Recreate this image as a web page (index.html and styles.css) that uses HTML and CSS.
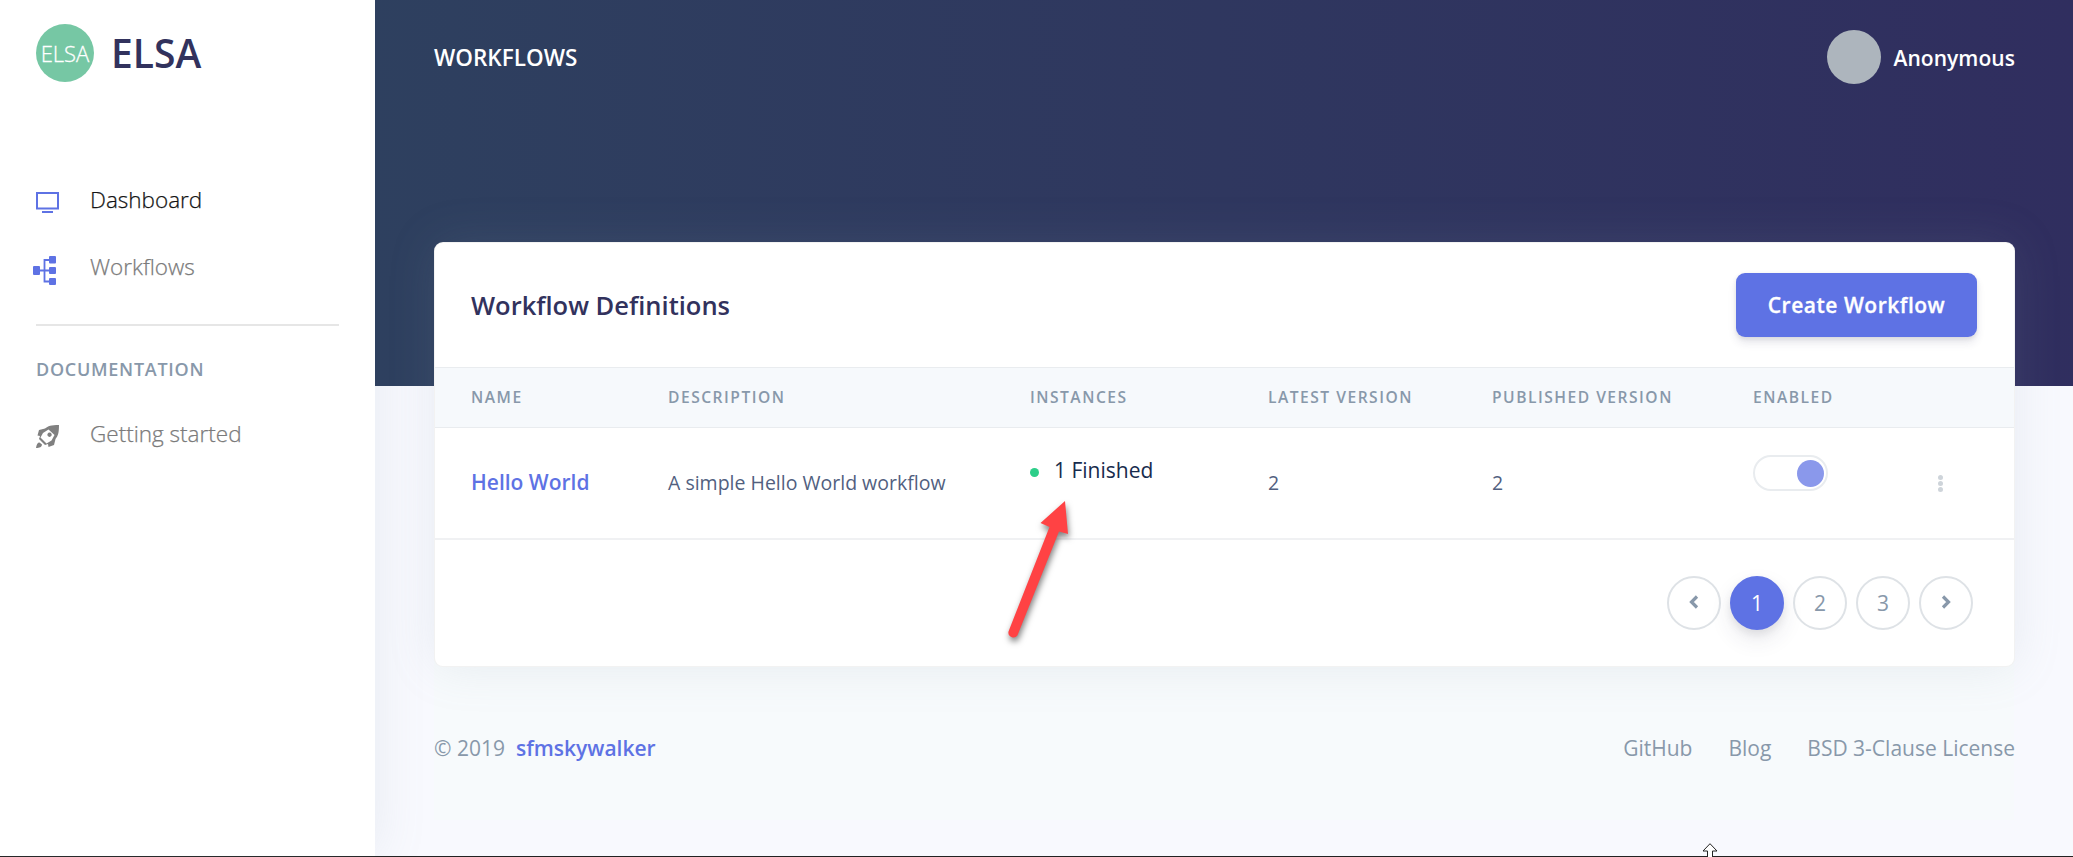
FILE: index.html
```html
<!DOCTYPE html>
<html lang="en">
<head>
<meta charset="utf-8">
<title>Elsa Workflows</title>
<link rel="stylesheet" href="styles.css">
</head>
<body>
<div class="app">
  <aside class="sidebar">
    <div class="brand">
      <span class="brand-logo"><span class="logo-text">ELSA</span></span>
      <span class="brand-name">ELSA</span>
    </div>
    <nav class="menu">
      <a class="menu-item active">
        <svg class="menu-icon" viewBox="0 0 28 28"><path fill="none" stroke="#5e72e4" stroke-width="2" d="M4 4h21v15.500H4zM9 23h11"/></svg>
        <span>Dashboard</span>
      </a>
      <a class="menu-item">
        <svg class="menu-icon tree" viewBox="0 0 28 32"><g fill="#5e72e4"><rect x="1" y="12" width="7" height="9" rx="1"/><rect x="17" y="2" width="7" height="7.500" rx="1"/><rect x="17" y="13" width="7" height="7" rx="1"/><rect x="17" y="24" width="7" height="7" rx="1"/></g><path fill="none" stroke="#5e72e4" stroke-width="1.800" d="M8 16.500h9M17 6h-4.500v21.500H17"/></svg>
        <span>Workflows</span>
      </a>
    </nav>
    <hr class="divider">
    <h6 class="menu-heading">Documentation</h6>
    <a class="menu-item">
      <svg class="menu-icon" viewBox="0 0 28 28"><path fill="#808080" fill-rule="evenodd" d="M26 2C18 2 15 3 12 5.500L6 7 4.500 12.500 7 13l-1 3 6 6 3-1 .5 3 5.500-2 1.500-6C25 13 26 10 26 2zM15.500 6.500l6 5.500-3 5.500-5 3-6-6 2.500-4.500zM16.500 9.500a2.200 2.200 0 1 0 .1 0zM6.500 19.500c-2 0-3 2-3.500 5.500 3.500 0 6-1 6-3.500z"/></svg>
      <span>Getting started</span>
    </a>
  </aside>
  <main class="main">
    <header class="hero">
      <h4 class="page-title">Workflows</h4>
      <div class="user"><span class="avatar"></span><span class="user-name">Anonymous</span></div>
    </header>
    <section class="card">
      <div class="card-head">
        <h3 class="card-title">Workflow Definitions</h3>
        <button class="create">Create Workflow</button>
      </div>
      <table class="grid">
        <colgroup><col class="c-name"><col class="c-desc"><col class="c-inst"><col class="c-latest"><col class="c-pub"><col class="c-enabled"><col></colgroup>
        <thead><tr><th>Name</th><th>Description</th><th>Instances</th><th>Latest Version</th><th>Published Version</th><th>Enabled</th><th></th></tr></thead>
        <tbody><tr>
          <td><a class="link">Hello World</a></td>
          <td>A simple Hello World workflow</td>
          <td><div class="status"><i class="dot"></i><span>1 Finished</span></div></td>
          <td>2</td>
          <td>2</td>
          <td><div class="toggle"><i class="knob"></i></div></td>
          <td><div class="kebab"><i></i><i></i><i></i></div></td>
        </tr></tbody>
      </table>
      <div class="pager">
        <a class="page"><svg viewBox="0 0 12 16" class="chev"><path d="M9 2.500 3.500 8 9 13.500"/></svg></a>
        <a class="page current">1</a>
        <a class="page">2</a>
        <a class="page">3</a>
        <a class="page"><svg viewBox="0 0 12 16" class="chev"><path d="M3 2.500 8.500 8 3 13.500"/></svg></a>
      </div>
    </section>
    <footer class="footer">
      <div class="copy"><span>© 2019</span><a class="link">sfmskywalker</a></div>
      <div class="foot-links"><a>GitHub</a><a>Blog</a><a>BSD 3-Clause License</a></div>
    </footer>
  </main>
</div>
<svg class="arrow" viewBox="0 0 90 160"><path fill="#ff4244" d="M75 11 50.500 33l9 4L18.500 141.500a5 5 0 0 0 9 3.800L69 41.500l9 2.500z"/></svg>
<svg class="cursor" viewBox="0 0 16 14"><path fill="#fff" stroke="#222" d="M8 .7 15 8H10.500v7H5.500V8H1z"/></svg>
</body>
</html>
```
FILE: styles.css
```css
* { box-sizing: border-box; }
body {
  margin: 0;
  font-family: "Open Sans", "Noto Sans", sans-serif;
  font-size: 21px;
  color: #525f7f;
  overflow: hidden;
}
h3, h4, h6 { margin: 0; }
.app { display: flex; height: 857px; border-bottom: 1px solid #222; }

.sidebar {
  position: relative;
  z-index: 1;
  width: 375px;
  padding: 24px 36px;
  background: #fff;
  box-shadow: 0 0 48px rgba(136, 152, 170, .15);
}
.brand { display: flex; align-items: center; gap: 17px; height: 58px; }
.brand-logo {
  display: flex;
  align-items: center;
  justify-content: center;
  width: 58px;
  height: 58px;
  border-radius: 50%;
  background: #76c7a4;
}
.logo-text { color: #fff; font-size: 22px; font-weight: 300; line-height: 28px; -webkit-text-stroke: .3px #fff; }
.brand-name { color: #32325d; font-size: 39px; font-weight: 600; line-height: 58px; }
.menu { margin-top: 84px; }
.menu-item { display: flex; align-items: center; height: 67px; color: #7b7b7b; font-size: 22.500px; font-weight: 300; -webkit-text-stroke: .25px currentColor; }
.menu-item.active { color: #141414; }
.menu-icon { width: 28px; height: 28px; margin: 7px 29px 0 -3px; }
.menu-icon.tree { height: 32px; margin: 6px 30px 0 -4px; }
.divider { margin: 24px 0 0; border: 0; border-top: 2px solid #e6e6e6; }
.menu-heading {
  margin: 30px 0 17px;
  color: #8898aa;
  font-size: 18px;
  font-weight: 600;
  line-height: 27px;
  letter-spacing: .72px;
  text-transform: uppercase;
}

.main {
  flex: 1;
  padding: 0 58px 0 59px;
  background: linear-gradient(#f7fafc, #f7fafc) 59px 0 / 1580px 820px no-repeat, #f8f9fe;
}
.hero {
  position: relative;
  z-index: 2;
  display: flex;
  justify-content: space-between;
  height: 386px;
  margin: 0 -58px -144px -59px;
  padding: 30px 58px 0 59px;
  color: #fff;
  background: linear-gradient(87deg, #2e405f, #302e5f);
}
.page-title { padding-top: 1px; font-size: 22.500px; font-weight: 600; line-height: 54px; text-transform: uppercase; }
.user { display: flex; align-items: center; gap: 13px; height: 54px; font-weight: 600; }
.user-name { padding-top: 2px; letter-spacing: .05px; }
.avatar { width: 54px; height: 54px; border-radius: 50%; background: #adb5bd; }

.card {
  position: relative;
  z-index: 3;
  height: 425px;
  background: #fff;
  border: 1px solid rgba(0, 0, 0, .05);
  border-radius: 9px;
  box-shadow: 0 0 48px rgba(136, 152, 170, .15);
}
.card-head { display: flex; justify-content: space-between; height: 124px; padding: 30px 37px 0 36px; }
.card-title { color: #32325d; font-size: 25.500px; font-weight: 600; line-height: 64px; }
.create {
  width: 241px;
  height: 64px;
  padding: 0;
  border: 0;
  border-radius: 9px;
  background: #5e72e4;
  color: #fff;
  font: 600 21px "Open Sans", sans-serif;
  letter-spacing: .525px;
  -webkit-text-stroke: .3px #fff;
  box-shadow: 0 6px 9px rgba(50, 50, 93, .11), 0 1.500px 4px rgba(0, 0, 0, .08);
}
.grid { width: 100%; table-layout: fixed; border-collapse: separate; border-spacing: 0; }
.c-name { width: 197px; }
.c-desc { width: 362px; }
.c-inst { width: 238px; }
.c-latest { width: 224px; }
.c-pub { width: 261px; }
.c-enabled { width: 175px; }
th {
  height: 61px;
  padding: 0 0 2px 36px;
  background: #f6f9fc;
  border: solid #e9ecef;
  border-width: 1px 0;
  color: #8898aa;
  font-size: 15.600px;
  font-weight: 600;
  letter-spacing: 1.500px;
  text-align: left;
  text-transform: uppercase;
  white-space: nowrap;
}
td { height: 112px; padding: 0 0 2px 36px; border-bottom: 2px solid #f0f1f3; font-size: 19.500px; white-space: nowrap; }
.link { color: #5e72e4; font-size: 21px; font-weight: 600; }
.status { display: flex; align-items: center; gap: 15px; padding-bottom: 25px; color: #172b4d; font-size: 21px; }
.dot { width: 9px; height: 9px; margin-top: 6px; border-radius: 50%; background: #2dce89; }
.toggle { display: flex; justify-content: flex-end; width: 75px; height: 36px; margin-bottom: 19px; padding: 3px 2px; border: 2px solid #e9ecef; border-radius: 18px; }
.knob { width: 27px; height: 27px; border-radius: 50%; background: #8a98eb; }
.kebab { display: flex; flex-direction: column; gap: 1px; padding: 3px 0 0 10px; }
.kebab i { width: 5px; height: 5px; border-radius: 50%; background: #ced4da; }
.pager { display: flex; justify-content: flex-end; gap: 9px; padding: 36px 41px 0 0; }
.page {
  display: flex;
  align-items: center;
  justify-content: center;
  width: 54px;
  height: 54px;
  border: 2px solid #dee2e6;
  border-radius: 50%;
  color: #8898aa;
}
.page.current {
  border-color: #5e72e4;
  background: #5e72e4;
  color: #fff;
  box-shadow: 0 10px 21px rgba(50, 50, 93, .1), 0 4px 9px rgba(0, 0, 0, .08);
}
.chev { width: 12px; height: 16px; margin-top: -2px; fill: none; stroke: #8898aa; stroke-width: 3.200; }

.footer { display: flex; justify-content: space-between; padding-top: 66px; line-height: 30px; color: #8898aa; }
.copy { display: flex; gap: 11px; }
.foot-links { display: flex; gap: 36px; }

.arrow { position: absolute; z-index: 4; left: 990px; top: 490px; width: 90px; height: 160px; filter: drop-shadow(1px 4px 3px rgba(0, 0, 0, .5)); }
.cursor { position: absolute; z-index: 4; left: 1702px; top: 843px; width: 16px; height: 14px; }
```
